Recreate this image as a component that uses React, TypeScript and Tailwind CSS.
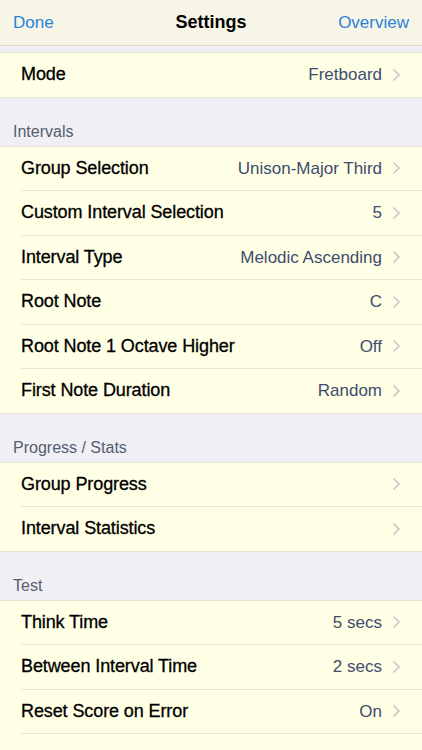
import React from "react";

interface Row {
  label: string;
  value?: string;
}

interface Section {
  title?: string;
  rows: Row[];
}

const SECTIONS: Section[] = [
  { rows: [{ label: "Mode", value: "Fretboard" }] },
  {
    title: "Intervals",
    rows: [
      { label: "Group Selection", value: "Unison-Major Third" },
      { label: "Custom Interval Selection", value: "5" },
      { label: "Interval Type", value: "Melodic Ascending" },
      { label: "Root Note", value: "C" },
      { label: "Root Note 1 Octave Higher", value: "Off" },
      { label: "First Note Duration", value: "Random" },
    ],
  },
  {
    title: "Progress / Stats",
    rows: [{ label: "Group Progress" }, { label: "Interval Statistics" }],
  },
  {
    title: "Test",
    rows: [
      { label: "Think Time", value: "5 secs" },
      { label: "Between Interval Time", value: "2 secs" },
      { label: "Reset Score on Error", value: "On" },
      // next row is scrolled below the fold; only its chevron tip peeks in
      { label: "" },
    ],
  },
];

const FONT = { fontFamily: "'Liberation Sans', Arial, sans-serif" };

function Chevron() {
  return (
    <svg width="9" height="14" viewBox="0 0 9 14" className="shrink-0">
      <path d="M1.5 1.5 L7 7 L1.5 12.5" fill="none" stroke="#c7c7cc" strokeWidth="1.6" />
    </svg>
  );
}

export default function App() {
  return (
    <div className="w-[422px] h-[750px] overflow-hidden bg-[#efeff4] flex flex-col" style={FONT}>
      {/* Nav bar */}
      <div className="h-[46px] shrink-0 bg-[#f6f5e6] border-b border-[#d6d6d0] grid grid-cols-[1fr_auto_1fr] items-center px-[13px]">
        <span className="text-[#2b82d9] text-[17px]">Done</span>
        <span className="text-black text-[18px] font-bold">Settings</span>
        <span className="text-[#2b82d9] text-[17px] text-right">Overview</span>
      </div>

      <div className="h-[6px] shrink-0" />

      {SECTIONS.map((section, si) => (
        <div key={si} className="shrink-0">
          {section.title && (
            <div className="h-[48px] flex items-end pb-[2px] px-[13px] text-[16px] text-[#555d70]">
              {section.title}
            </div>
          )}
          <div className="bg-[#ffffe6] border-y border-[#e4e4d4]">
            {section.rows.map((row, ri) => (
              <div key={ri} className="pl-[21px]">
                <div
                  className={`flex items-center pr-[21px] ${
                    ri < section.rows.length - 1 ? "h-[44.5px] border-b border-[#e6e6d6]" : "h-[43.5px]"
                  }`}
                >
                  <span
                    className="text-[18px] text-black tracking-[-0.1px]"
                    style={{ WebkitTextStroke: "0.3px #000" }}
                  >
                    {row.label}
                  </span>
                  <span className="ml-auto text-[17px] text-[#3e4c6d] mr-[10px]">{row.value}</span>
                  <Chevron />
                </div>
              </div>
            ))}
          </div>
        </div>
      ))}
    </div>
  );
}
